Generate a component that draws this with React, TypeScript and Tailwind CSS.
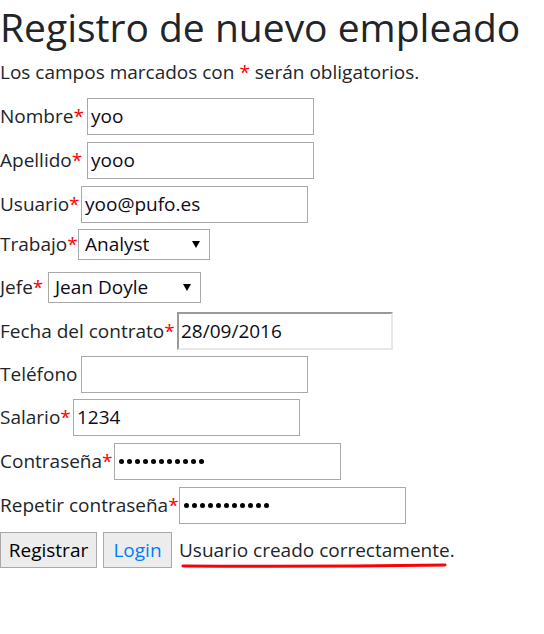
import React from "react";

const Star = () => <span className="text-[#ff0000]">*</span>;

function Row({
  label,
  req = true,
  w,
  mt,
  children,
}: {
  label: string;
  req?: boolean;
  w: string;
  mt: string;
  children: React.ReactNode;
}) {
  return (
    <div className={`flex items-center ${mt}`}>
      <span className={`${w} shrink-0 whitespace-nowrap`}>
        {label}
        {req && <Star />}
      </span>
      {children}
    </div>
  );
}

const Dots = () => (
  <div className="flex gap-[3px] pl-[1px]">
    {Array.from({ length: 11 }).map((_, i) => (
      <span key={i} className="w-[5px] h-[5px] rounded-full bg-black" />
    ))}
  </div>
);

const Input = ({ value, pw = false }: { value: string; pw?: boolean }) => (
  <div className="w-[227px] h-[37px] border border-[#a9a9a9] bg-white flex items-center px-[3px] text-[#0b0b20]">
    {pw ? <Dots /> : value}
  </div>
);

const Select = ({ value, w }: { value: string; w: string }) => (
  <div className={`${w} h-[31px] border border-[#a9a9a9] bg-white flex items-center justify-between pl-[6px] pr-[9px] text-[#0b0b20]`}>
    <span>{value}</span>
    <svg width="8" height="7" viewBox="0 0 8 7">
      <path d="M0 0 L8 0 L4 7 Z" fill="#000" />
    </svg>
  </div>
);

export default function App() {
  return (
    <div className="w-[544px] h-[634px] bg-white text-[#212529] font-['Open_Sans',sans-serif] text-[19px] leading-[1.3]">
      <h1 className="text-[39px] font-medium leading-[54px] whitespace-nowrap">
        Registro de nuevo empleado
      </h1>
      <p className="mt-[6px] leading-[24px]">
        Los campos marcados con <Star /> serán obligatorios.
      </p>
      <div className="flex flex-col">
        <Row label="Nombre" w="w-[87px]" mt="mt-[14px]">
          <Input value="yoo" />
        </Row>
        <Row label="Apellido" w="w-[87px]" mt="mt-[7px]">
          <Input value="yooo" />
        </Row>
        <Row label="Usuario" w="w-[81px]" mt="mt-[7px]">
          <Input value="yoo@pufo.es" />
        </Row>
        <Row label="Trabajo" w="w-[78px]" mt="mt-[6px]">
          <Select value="Analyst" w="w-[132px]" />
        </Row>
        <Row label="Jefe" w="w-[48px]" mt="mt-[12px]">
          <Select value="Jean Doyle" w="w-[153px]" />
        </Row>
        <Row label="Fecha del contrato" w="w-[177px]" mt="mt-[9px]">
          <div className="w-[216px] h-[38px] border-2 border-t-[#9a9a9a] border-l-[#9a9a9a] border-b-[#e8e8e8] border-r-[#e8e8e8] bg-white flex items-center px-[2px] text-[#0b0b20]">
            28/09/2016
          </div>
        </Row>
        <Row label="Teléfono" req={false} w="w-[81px]" mt="mt-[6px]">
          <Input value="" />
        </Row>
        <Row label="Salario" w="w-[73px]" mt="mt-[6px]">
          <Input value="1234" />
        </Row>
        <Row label="Contraseña" w="w-[114px]" mt="mt-[7px]">
          <Input value="" pw />
        </Row>
        <Row label="Repetir contraseña" w="w-[179px]" mt="mt-[7px]">
          <Input value="" pw />
        </Row>
        <div className="flex items-center mt-[8px]">
          <button className="w-[97px] h-[36px] border border-[#a9a9a9] bg-[#ececec] text-[#000]">
            Registrar
          </button>
          <button className="ml-[6px] w-[69px] h-[36px] border border-[#a9a9a9] bg-[#ececec] text-[#007bff]">
            Login
          </button>
          <span className="ml-[7px] relative">
            Usuario creado correctamente.
            <svg
              className="absolute left-[2px] top-[24px]"
              width="266"
              height="8"
              viewBox="0 0 266 8"
            >
              <path
                d="M2 4 Q 130 5 264 3"
                stroke="#ff0000"
                strokeWidth="3"
                strokeLinecap="round"
                fill="none"
              />
            </svg>
          </span>
        </div>
      </div>
    </div>
  );
}
